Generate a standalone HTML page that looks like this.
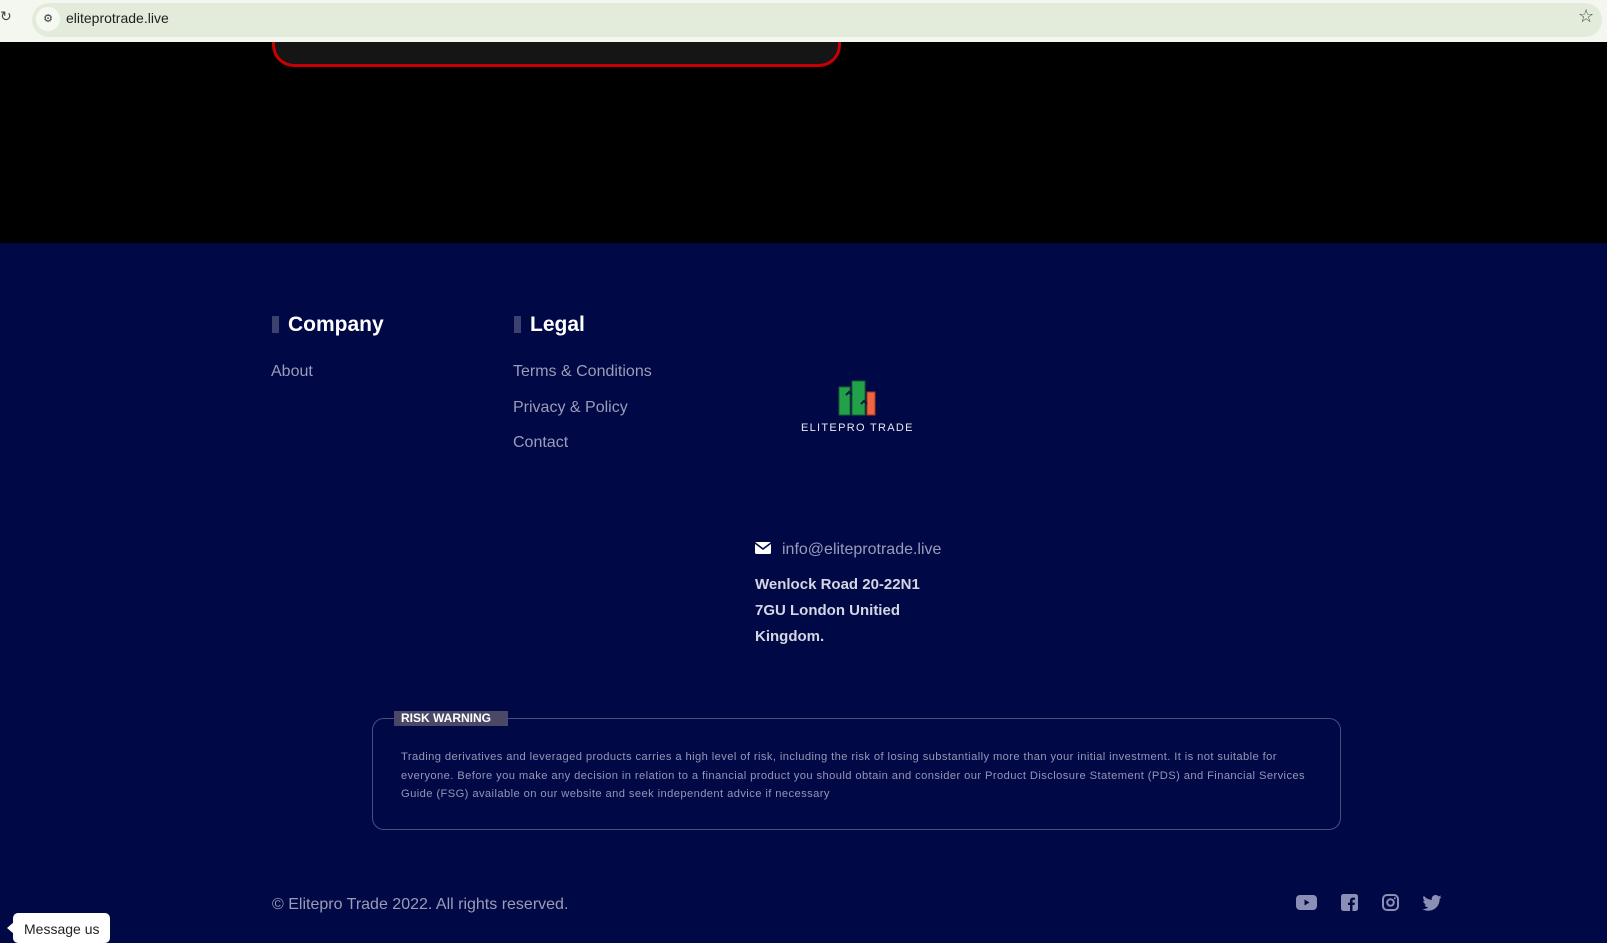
<!DOCTYPE html>
<html><head><meta charset="utf-8"><style>
*{margin:0;padding:0;box-sizing:border-box}
body{width:1607px;height:938px;overflow:hidden;background:#000845;font-family:"Liberation Sans",sans-serif;position:relative}
.a{position:absolute;white-space:nowrap}
.bar{left:0;top:0;width:1607px;height:42px;background:#f3f7ef;z-index:5}
.url{left:32px;top:3px;width:1570px;height:34px;border-radius:17px;background:#e3ecdb;z-index:6}
.top{z-index:7}
.black{left:0;top:42px;width:1607px;height:201px;background:#000}
.red{left:272px;top:20px;width:569px;height:47px;border:3px solid #c80000;border-top:none;border-radius:0 0 22px 22px;background:#151515}
.h{font-weight:bold;font-size:21px;color:#fff}
.hb{width:7px;height:17px;background:#3c4170}
.l{font-size:16px;color:#9a9cb8}
.ad{font-size:15px;color:#d4d6e4;font-weight:bold;line-height:26px}
.rt{font-size:11.2px;color:#9496b6;line-height:18.5px;letter-spacing:0.4px}
</style></head><body>
<div class="a black"></div>
<div class="a red"></div>
<div class="a bar"></div>
<div class="a url"></div>
<div class="a top" style="left:0;top:8px;font-size:14px;color:#444">↻</div>
<div class="a top" style="left:36px;top:7px;width:24px;height:24px;border-radius:12px;background:#f6f9f2;font-size:11px;text-align:center;line-height:24px;color:#333">⚙</div>
<div class="a top" style="left:66px;top:10px;font-size:14px;color:#1f1f1f">eliteprotrade.live</div>
<div class="a top" style="left:1578px;top:6px;font-size:18px;color:#444">☆</div>

<div class="a hb" style="left:272px;top:316px"></div>
<div class="a h" style="left:288px;top:313px">Company</div>
<div class="a hb" style="left:514px;top:316px"></div>
<div class="a h" style="left:530px;top:313px">Legal</div>
<div class="a l" style="left:271px;top:363px">About</div>
<div class="a l" style="left:513px;top:363px">Terms &amp; Conditions</div>
<div class="a l" style="left:513px;top:399px">Privacy &amp; Policy</div>
<div class="a l" style="left:513px;top:434px">Contact</div>

<svg class="a" style="left:836px;top:380px" width="46" height="38" viewBox="0 0 46 38">
<rect x="3" y="7" width="11" height="28" fill="#22a04a" stroke="#155f2e"/>
<rect x="16" y="1" width="13" height="34" fill="#22a04a" stroke="#155f2e"/>
<rect x="31" y="12" width="8" height="23" fill="#f06540" stroke="#a03a20"/>
<path d="M10 15l3-3 3 3M25 24l3-3 3 3" stroke="#0b1a40" stroke-width="2" fill="none"/>
</svg>
<div class="a" style="left:801px;top:422px;font-size:11px;color:#e8e8f0;letter-spacing:1.3px">ELITEPRO TRADE</div>

<svg class="a" style="left:755px;top:542px" width="16" height="12" viewBox="0 0 16 12"><rect width="16" height="12" rx="1.5" fill="#fff"/><path d="M0 1l8 6 8-6" stroke="#000845" stroke-width="1.6" fill="none"/></svg>
<div class="a l" style="left:782px;top:541px">info@eliteprotrade.live</div>
<div class="a ad" style="left:755px;top:572px">Wenlock Road 20-22N1<br>7GU London Unitied<br>Kingdom.</div>

<div class="a" style="left:372px;top:718px;width:969px;height:112px;border:1px solid #4a4f7e;border-radius:12px"></div>
<div class="a" style="left:394px;top:711px;width:114px;height:15px;background:#4b4767;color:#fff;font-weight:bold;font-size:12px;line-height:15px;padding-left:7px">RISK WARNING</div>
<div class="a rt" style="left:401px;top:748px">Trading derivatives and leveraged products carries a high level of risk, including the risk of losing substantially more than your initial investment. It is not suitable for<br>everyone. Before you make any decision in relation to a financial product you should obtain and consider our Product Disclosure Statement (PDS) and Financial Services<br>Guide (FSG) available on our website and seek independent advice if necessary</div>

<div class="a l" style="left:272px;top:896px">© Elitepro Trade 2022. All rights reserved.</div>
<svg class="a" style="left:1296px;top:895px" width="22" height="16" viewBox="0 0 22 16"><rect width="21" height="15" rx="4" fill="#8c8fb5"/><path d="M8.5 4.5v6l5-3z" fill="#000845"/></svg>
<svg class="a" style="left:1341px;top:894px" width="17" height="17" viewBox="0 0 17 17"><rect width="17" height="17" rx="2.5" fill="#8c8fb5"/><path d="M11.5 17v-6h2l.4-2.4h-2.4V7c0-.7.3-1.2 1.3-1.2H14V3.7c-.4 0-1.1-.1-1.9-.1-2 0-3.1 1.1-3.1 3.1v1.9H7V11h2v6z" fill="#000845"/></svg>
<svg class="a" style="left:1382px;top:894px" width="17" height="17" viewBox="0 0 17 17"><rect x="1" y="1" width="15" height="15" rx="4" fill="none" stroke="#8c8fb5" stroke-width="2"/><circle cx="8.5" cy="8.5" r="3.3" fill="none" stroke="#8c8fb5" stroke-width="2"/><circle cx="12.8" cy="4.2" r="1" fill="#8c8fb5"/></svg>
<svg class="a" style="left:1422px;top:895px" width="20" height="16" viewBox="0 0 24 20"><path d="M24 2.4a10 10 0 0 1-2.8.8A4.9 4.9 0 0 0 23.3.5a9.8 9.8 0 0 1-3.1 1.2A4.9 4.9 0 0 0 11.8 6.2 14 14 0 0 1 1.7 1 4.9 4.9 0 0 0 3.2 7.6 4.9 4.9 0 0 1 1 7v.1a4.9 4.9 0 0 0 3.9 4.8 4.9 4.9 0 0 1-2.2.1 4.9 4.9 0 0 0 4.6 3.4A9.9 9.9 0 0 1 0 17.5 14 14 0 0 0 7.5 19.7c9 0 14-7.5 14-14v-.6A10 10 0 0 0 24 2.4z" fill="#8c8fb5"/></svg>

<div class="a" style="left:13px;top:913px;width:97px;height:30px;background:#fff;border-radius:5px;font-size:14px;color:#222;padding:8px 0 0 11px">Message us</div>
<div class="a" style="left:7px;top:922px;width:0;height:0;border-top:6px solid transparent;border-bottom:6px solid transparent;border-right:7px solid #fff"></div>
</body></html>
